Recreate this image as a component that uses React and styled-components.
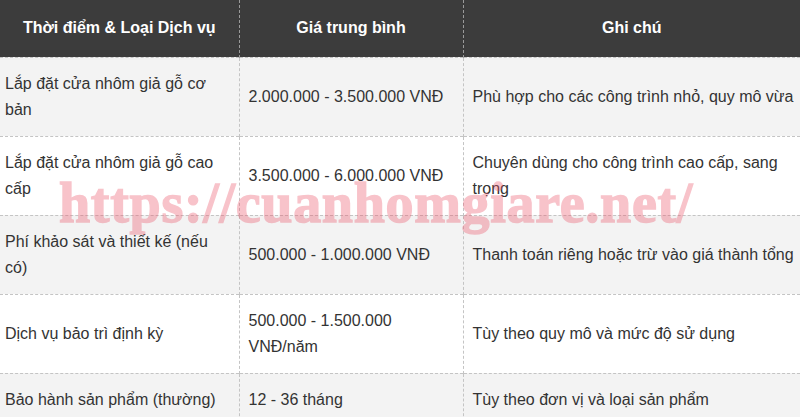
import React from "react";
import styled, { createGlobalStyle } from "styled-components";

const Global = createGlobalStyle`
  html, body { margin: 0; padding: 0; background: #ffffff; }
  body { font-family: "Liberation Sans", Arial, sans-serif; }
`;

const Wrap = styled.div`
  position: relative;
  width: 800px;
  height: 417px;
  overflow: hidden;
`;

const Table = styled.table`
  width: 800px;
  border-collapse: collapse;
  table-layout: fixed;
  font-size: 16px;
  color: #333333;
`;

const Head = styled.th`
  background: #3c3c3c;
  color: #ffffff;
  font-weight: bold;
  font-size: 16px;
  height: 57px;
  padding: 0 9px;
  text-align: center;
  vertical-align: middle;
  box-sizing: border-box;
  border-left: 1px dashed #9a9a9a;
  &:first-child { border-left: none; }
`;

const Row = styled.tr`
  background: ${(p) => (p.$shade ? "#f3f3f3" : "#ffffff")};
  border-top: 1px dashed #c4c4c4;
`;

const Cell = styled.td`
  padding: 13px 9px;
  line-height: 26px;
  vertical-align: middle;
  border-left: 1px dashed #c4c4c4;
  &:first-child {
    border-left: none;
    padding-left: 5px;
  }
  &:last-child {
    padding-right: 2px;
  }
`;

const Watermark = styled.div`
  position: absolute;
  left: 59px;
  top: 171px;
  font-family: "Liberation Serif", "Times New Roman", serif;
  font-weight: bold;
  font-size: 56px;
  letter-spacing: 0.7px;
  color: #ec5a6e;
  -webkit-text-stroke: 1.4px #ec5a6e;
  opacity: 0.36;
  white-space: nowrap;
  pointer-events: none;
`;

const rows = [
  ["Lắp đặt cửa nhôm giả gỗ cơ bản", "2.000.000 - 3.500.000 VNĐ", "Phù hợp cho các công trình nhỏ, quy mô vừa"],
  ["Lắp đặt cửa nhôm giả gỗ cao cấp", "3.500.000 - 6.000.000 VNĐ", "Chuyên dùng cho công trình cao cấp, sang trọng"],
  ["Phí khảo sát và thiết kế (nếu có)", "500.000 - 1.000.000 VNĐ", "Thanh toán riêng hoặc trừ vào giá thành tổng"],
  ["Dịch vụ bảo trì định kỳ", "500.000 - 1.500.000 VNĐ/năm", "Tùy theo quy mô và mức độ sử dụng"],
  ["Bảo hành sản phẩm (thường)", "12 - 36 tháng", "Tùy theo đơn vị và loại sản phẩm"],
];

export default function App() {
  return (
    <Wrap>
      <Global />
      <Table>
        <colgroup>
          <col style={{ width: 239 }} />
          <col style={{ width: 224 }} />
          <col style={{ width: 337 }} />
        </colgroup>
        <thead>
          <tr>
            <Head>Thời điểm &amp; Loại Dịch vụ</Head>
            <Head>Giá trung bình</Head>
            <Head>Ghi chú</Head>
          </tr>
        </thead>
        <tbody>
          {rows.map((r, i) => (
            <Row key={i} $shade={i % 2 === 0}>
              {r.map((c, j) => (
                <Cell key={j}>{c}</Cell>
              ))}
            </Row>
          ))}
        </tbody>
      </Table>
      <Watermark>https://cuanhomgiare.net/</Watermark>
    </Wrap>
  );
}
